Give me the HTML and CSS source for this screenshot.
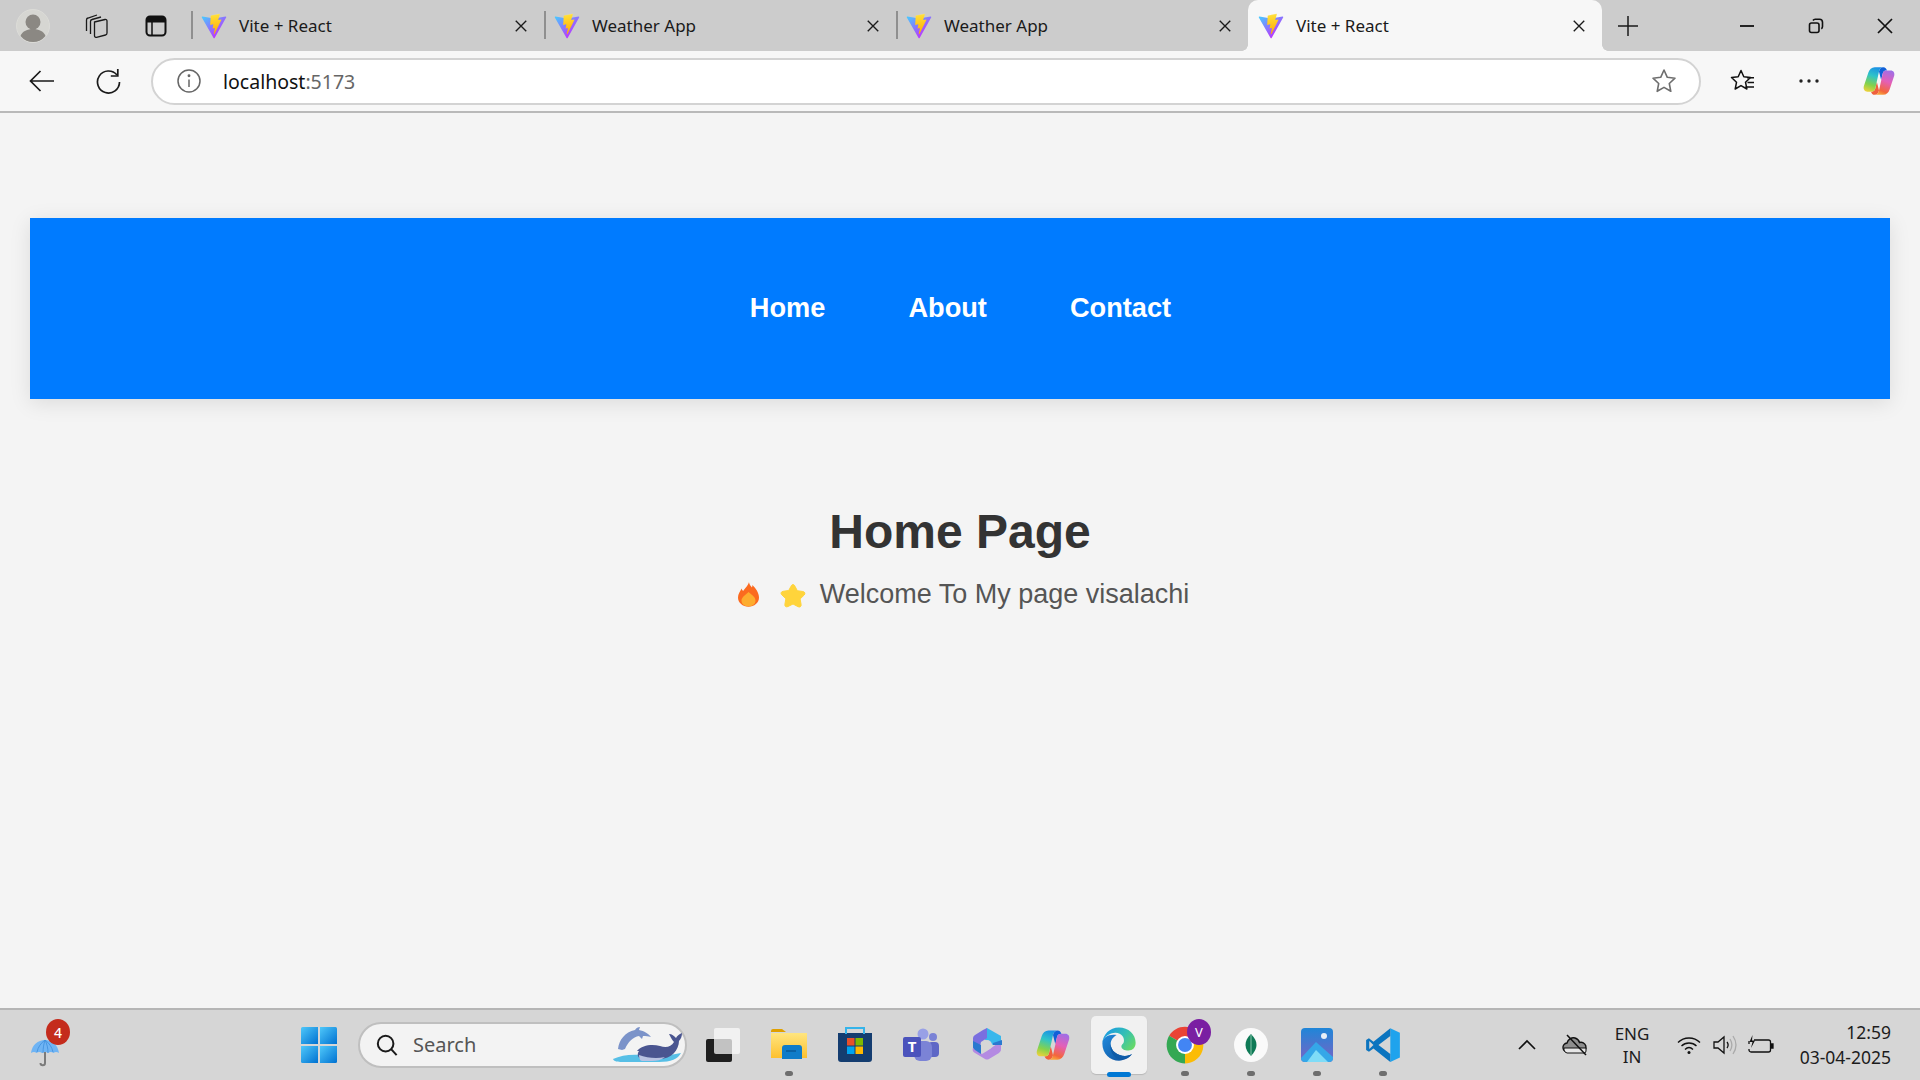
FILE: index.html
```html
<!DOCTYPE html>
<html lang="en">
<head>
<meta charset="utf-8">
<title>Vite + React</title>
<link rel="stylesheet" href="styles.css">
</head>
<body>
<svg class="defs" width="0" height="0" aria-hidden="true">
  <defs>
    <linearGradient id="viteA" x1="2" y1="4" x2="20" y2="28" gradientUnits="userSpaceOnUse"><stop offset="0" stop-color="#41d1ff"/><stop offset="1" stop-color="#bd34fe"/></linearGradient>
    <linearGradient id="viteB" x1="15" y1="2" x2="18" y2="26" gradientUnits="userSpaceOnUse"><stop offset="0" stop-color="#ffea83"/><stop offset=".1" stop-color="#ffdd35"/><stop offset="1" stop-color="#ffa800"/></linearGradient>
    <linearGradient id="copL" x1="14" y1="3" x2="6" y2="27" gradientUnits="userSpaceOnUse"><stop offset="0" stop-color="#1a8fe6"/><stop offset=".35" stop-color="#2fc4c8"/><stop offset=".7" stop-color="#86d24a"/><stop offset="1" stop-color="#f7d13a"/></linearGradient>
    <linearGradient id="copR" x1="27" y1="6" x2="18" y2="29" gradientUnits="userSpaceOnUse"><stop offset="0" stop-color="#9c6fe8"/><stop offset=".45" stop-color="#e45fb8"/><stop offset=".85" stop-color="#f3663c"/><stop offset="1" stop-color="#f8a33c"/></linearGradient>
    <linearGradient id="edgeT" x1="6" y1="4" x2="28" y2="22" gradientUnits="userSpaceOnUse"><stop offset="0" stop-color="#1b9de2"/><stop offset=".5" stop-color="#35c1b1"/><stop offset="1" stop-color="#6fdc5c"/></linearGradient>
    <linearGradient id="edgeB" x1="4" y1="10" x2="24" y2="30" gradientUnits="userSpaceOnUse"><stop offset="0" stop-color="#1f86d8"/><stop offset="1" stop-color="#0c4f9a"/></linearGradient>
    <linearGradient id="winG" x1="0" y1="0" x2="1" y2="1"><stop offset="0" stop-color="#4fc8fa"/><stop offset="1" stop-color="#0071d1"/></linearGradient>
    <linearGradient id="photoG" x1="0" y1="0" x2="0" y2="1"><stop offset="0" stop-color="#1f86d8"/><stop offset="1" stop-color="#7a63c4"/></linearGradient>
    <linearGradient id="folderG" x1="0" y1="0" x2="0" y2="1"><stop offset="0" stop-color="#ffe680"/><stop offset="1" stop-color="#fdc02f"/></linearGradient>
    <symbol id="vite" viewBox="0 0 32 32">
      <path fill="url(#viteA)" d="M29.884 6.146 16.742 29.646a.714.714 0 0 1-1.244.005L2.096 6.148a.714.714 0 0 1 .746-1.057l13.156 2.352a.714.714 0 0 0 .253 0l12.881-2.348a.714.714 0 0 1 .752 1.051Z"/>
      <path fill="url(#viteB)" d="M22.264 2.007 12.54 3.912a.357.357 0 0 0-.288.33l-.598 10.104a.357.357 0 0 0 .437.369l2.707-.625a.357.357 0 0 1 .43.42l-.804 3.939a.357.357 0 0 0 .453.413l1.672-.508a.357.357 0 0 1 .453.414l-1.278 6.187c-.08.387.435.598.65.267l.143-.222 7.925-15.815a.357.357 0 0 0-.387-.51l-2.787.538a.357.357 0 0 1-.41-.45l1.819-6.306a.357.357 0 0 0-.413-.45Z"/>
    </symbol>
    <symbol id="close" viewBox="0 0 16 16"><path d="M2 2 14 14M14 2 2 14" fill="none" stroke="#1a1a1a" stroke-width="1.6"/></symbol>
    <symbol id="copilot" viewBox="0 0 32 32">
      <path fill="#1060d8" d="M16 7C16.500 5 17.500 3 20 3 22 3 23 4.500 23.500 6 21.500 6 20 6.500 19.500 9L18 15Z"/>
      <path fill="#f0603c" d="M16 25C15.500 27 14.500 29 12 29 10 29 9 27.500 8.500 26 10.500 26 12 25.500 12.500 23L14 17Z"/>
      <path fill="url(#copL)" d="M12 3H20C17.500 3 16.500 5 16 7L12.500 23C12 25.500 10.500 26 8.500 26H5C2.500 26 1 24 1.700 21L6 8C7 5 9 3 12 3Z"/>
      <path fill="url(#copR)" d="M20 29H12C14.500 29 15.500 27 16 25L19.500 9C20 6.500 21.500 6 23.500 6H27C29.500 6 31 8 30.300 11L26 24C25 27 23 29 20 29Z"/>
    </symbol>
  </defs>
</svg>

<div class="window">
  <header class="tabstrip">
    <div class="strip-slot strip-avatar">
      <svg class="ico-avatar" viewBox="0 0 34 34"><circle cx="17" cy="17" r="16.500" fill="#d6d6d2" stroke="#dcdcd8"/><circle cx="17" cy="13" r="7.500" fill="#8b8883"/><path d="M4.500 27c2-5 7-7 12.500-7s10.500 2 12.500 7a16 16 0 0 1-25 0Z" fill="#8b8883"/></svg>
    </div>
    <div class="strip-slot strip-coll">
      <svg class="ico-24" viewBox="0 0 24 24" fill="none" stroke="#1a1a1a" stroke-width="1.300"><path d="M2.500 17V6c0-1 .5-1.800 1.500-2L13 1"/><path d="M6.500 20V7.500c0-1 .5-1.800 1.500-2L17 3"/><path d="M10.500 8l10.500-2.500c1.200-.3 2 .4 2 1.600V19c0 1-.5 1.800-1.500 2l-9 2.300c-1.200.3-2-.4-2-1.600Z"/></svg>
    </div>
    <div class="strip-slot strip-vert">
      <svg class="ico-24" viewBox="0 0 24 24"><rect x="2.500" y="2.500" width="19" height="19" rx="3.500" fill="none" stroke="#111" stroke-width="2"/><path d="M3 3h18v5.500H3Z" fill="#111"/><path d="M8 8v13" stroke="#111" stroke-width="1.500"/></svg>
    </div>
    <div class="tabs">
      <div class="tab"><i class="tab-sep"></i><svg class="ico-vite"><use href="#vite"/></svg><span class="tab-title">Vite + React</span><svg class="ico-close"><use href="#close"/></svg></div>
      <div class="tab"><i class="tab-sep"></i><svg class="ico-vite"><use href="#vite"/></svg><span class="tab-title">Weather App</span><svg class="ico-close"><use href="#close"/></svg></div>
      <div class="tab"><i class="tab-sep"></i><svg class="ico-vite"><use href="#vite"/></svg><span class="tab-title">Weather App</span><svg class="ico-close"><use href="#close"/></svg></div>
      <div class="tab tab-active"><i class="tab-gap"></i><svg class="ico-vite"><use href="#vite"/></svg><span class="tab-title">Vite + React</span><svg class="ico-close"><use href="#close"/></svg></div>
    </div>
    <div class="strip-new">
      <svg class="ico-22" viewBox="0 0 22 22"><path d="M11 1v20M1 11h20" stroke="#1a1a1a" stroke-width="1.500" fill="none"/></svg>
    </div>
    <div class="winctl">
      <div class="winbtn"><svg class="ico-16" viewBox="0 0 16 16"><path d="M1 8h14" stroke="#111" stroke-width="1.800"/></svg></div>
      <div class="winbtn"><svg class="ico-16" viewBox="0 0 16 16" fill="none" stroke="#111" stroke-width="1.600"><rect x="1.500" y="5" width="9.500" height="9.500" rx="2"/><path d="M5 2.500c.5-.8 1.200-1.200 2.200-1.200h4.300c1.800 0 3 1.200 3 3v4.300c0 1-.4 1.700-1.200 2.200"/></svg></div>
      <div class="winbtn"><svg class="ico-16" viewBox="0 0 16 16"><path d="M1 1 15 15M15 1 1 15" stroke="#111" stroke-width="1.700" fill="none"/></svg></div>
    </div>
  </header>

  <div class="toolbar">
    <div class="tool-slot">
      <svg class="ico-26" viewBox="0 0 26 26" fill="none" stroke="#1a1a1a" stroke-width="1.700"><path d="M25 13H1.500M11.500 3 1.500 13l10 10"/></svg>
    </div>
    <div class="tool-slot">
      <svg class="ico-26" viewBox="0 0 26 26" fill="none" stroke="#1a1a1a" stroke-width="1.700"><path d="M22 7A11 11 0 1 0 24.500 14"/><path d="M22.800 1v7h-7"/></svg>
    </div>
    <div class="addressbar">
      <svg class="ico-info" viewBox="0 0 24 24" fill="none" stroke="#666" stroke-width="1.500"><circle cx="12" cy="12" r="11"/><path d="M12 10.500V18"/><circle cx="12" cy="6.800" r=".7" fill="#666"/></svg>
      <span class="url">localhost<span class="url-port">:5173</span></span>
      <svg class="ico-star" viewBox="0 0 26 26" fill="none" stroke="#6e6e6e" stroke-width="1.600" stroke-linejoin="round"><path d="m13 2 3.300 7.300 7.700.9-5.700 5.300 1.500 7.800L13 19.400l-6.800 3.900 1.500-7.800L2 10.200l7.700-.9Z"/></svg>
    </div>
    <div class="tool-actions">
      <div class="tool-slot">
        <svg class="ico-26" viewBox="0 0 26 26" fill="none" stroke="#111" stroke-width="1.500" stroke-linejoin="round"><path d="m11 2.500 2.800 6.300 6.700.7-5 4.700 1.400 6.800-5.900-3.400-5.800 3.400 1.300-6.700-5-4.800 6.700-.7Z"/><path d="M17 9.800h7M17.500 14.500h6.500M15.500 19h8.500"/></svg>
      </div>
      <div class="tool-slot">
        <svg class="ico-22" viewBox="0 0 22 22" fill="#222"><circle cx="3" cy="11" r="1.700"/><circle cx="11" cy="11" r="1.700"/><circle cx="19" cy="11" r="1.700"/></svg>
      </div>
      <div class="tool-slot">
        <svg class="ico-34"><use href="#copilot"/></svg>
      </div>
    </div>
  </div>

  <main class="page">
    <nav class="navbar">
      <a class="navlink">Home</a>
      <a class="navlink">About</a>
      <a class="navlink">Contact</a>
    </nav>
    <section class="hero">
      <h1 class="hero-title">Home Page</h1>
      <p class="hero-sub">
        <svg class="emoji" viewBox="0 0 24 28"><path d="M12.500 0c.8 3 1.800 4 3.500 6 .3-1 .5-1.700.4-2.800C20 6.500 24 12 24 17.500 24 23.500 18.500 28 12 28S0 23.500 0 17.500C0 13 2.500 10.500 4 7c.5 1.300 1 2 2 3 1.500-3 5-5 6.500-10Z" fill="#fb6a1f"/><path d="M12 11c3.500 3 8 5.500 8 10 0 3.500-3.500 6.500-8 6.500S4 24.500 4 21c0-4.500 5-6.500 8-10Z" fill="#fdac2e"/></svg>
        <svg class="emoji emoji-star" viewBox="0 0 28 26"><path d="M14 2.500c1 0 1.500.8 2 1.800l2.300 4.400 5.500.8c2.300.4 2.700 2.200 1.300 3.600l-4 3.900 1 5.400c.4 2.200-1.300 3.200-3 2.300L14 22l-5 2.500c-1.800 1-3.500-.1-3.100-2.300l1-5.400-4-3.900c-1.500-1.400-1-3.200 1.300-3.600l5.500-.8L12 4.300c.5-1 1-1.800 2-1.800Z" fill="#ffd43b" stroke="#ffd43b"/></svg>
        <span>Welcome To My page visalachi</span>
      </p>
    </section>
  </main>

  <footer class="taskbar">
    <div class="tb-weather">
      <svg class="ico-weather" viewBox="0 0 30 30"><path d="M1 16C2 8 8 3 15 3s13 5 14 13c-2-1.500-4-1.500-5.500 0-1.500-1.500-4-1.500-5.500 0-1.500-1.500-4-1.500-6 0-1.500-1.500-4-1.500-5.500 0C5 14.500 3 14.500 1 16Z" fill="#6fb4f4"/><path d="M13 16c0-5 .8-9 2-13M18 16c0-5-1-9-3-13M7 15c1-5 4-9 8-12M23 15c-1-5-4-9-8-12" stroke="#3f8edc" stroke-width=".8" fill="none"/><path d="M15 15v11c0 3-4.500 3-4.500 0" fill="none" stroke="#7b7b7b" stroke-width="2"/></svg>
      <span class="badge badge-red">4</span>
    </div>
    <div class="tb-start">
      <svg class="ico-start" viewBox="0 0 36 36"><g fill="url(#winG)"><path d="M1.500 0H17v17H0V1.500A1.500 1.500 0 0 1 1.500 0Z"/><path d="M19 0h15.500A1.500 1.500 0 0 1 36 1.500V17H19Z"/><path d="M0 19h17v17H1.500A1.500 1.500 0 0 1 0 34.500Z"/><path d="M19 19h17v15.500a1.500 1.500 0 0 1-1.500 1.500H19Z"/></g></svg>
    </div>
    <div class="tb-search">
      <svg class="ico-search" viewBox="0 0 24 24" fill="none" stroke="#1a1a1a" stroke-width="2.200"><circle cx="10.500" cy="10.500" r="8.500"/><path d="m16.500 16.500 6 6.500"/></svg>
      <span class="tb-search-text">Search</span>
      <svg class="ico-whales" viewBox="0 0 74 40">
        <path d="M2 34c8-4 18-5 30-4 10 1 24 1 38-2-3 6-10 9-22 9H14C8 37 3 37 2 34Z" fill="#57bfe6"/>
        <path d="M7 24C8 15 14 7 24 5c1-2 3-3 5-3l-1 3c5 1 10 4 12 7-3-1-5-1-8-1l-1 3-3-3c-6 1-11 6-14 13l-3 1Z" fill="#7b93c9"/>
        <path d="M26 26c5-6 15-7 23-5 6 2 11 1 14-4-2-2-4-6-5-8 3 0 5 2 7 4 1-2 3-4 6-5 0 3-1 6-3 8 0 9-8 18-19 18H31c-3 0-6-4-3-8Z" fill="#4a5590"/>
        <path d="M28 30c8 3 18 4 26 2-4 3-8 4-13 4H31c-2 0-3-3-3-6Z" fill="#b9c2e2"/>
      </svg>
    </div>
    <div class="tb-apps">
      <div class="tb-app"><svg class="ico-36" viewBox="0 0 36 36"><rect x="1" y="12" width="26" height="23" rx="2" fill="#1f1f1f"/><rect x="9" y="1" width="26" height="26" rx="2" fill="#fafafa" opacity=".75"/></svg></div>
      <div class="tb-app tb-run"><svg class="ico-36" viewBox="0 0 36 36"><path d="M0 4a2 2 0 0 1 2-2h9l4 3h-15Z" fill="#e0a000"/><path d="M0 6h36v25H0Z" fill="url(#folderG)"/><path d="M14 21a3 3 0 0 1 3-3h14a3 3 0 0 1 3 3v11H14Z" fill="#0f7cc9" transform="translate(-3 0)"/><path d="M15 24h10" stroke="#0a5a99" stroke-width="1.500"/></svg></div>
      <div class="tb-app"><svg class="ico-36" viewBox="0 0 36 36"><path d="M1 6h34v26a3 3 0 0 1-3 3H4a3 3 0 0 1-3-3Z" fill="#143d70"/><path d="M9 7V1h18v6" fill="none" stroke="#35b4ea" stroke-width="2"/><rect x="10" y="11" width="7.500" height="7.500" fill="#e8502a"/><rect x="18.500" y="11" width="7.500" height="7.500" fill="#7fb900"/><rect x="10" y="19.500" width="7.500" height="7.500" fill="#00a4ef"/><rect x="18.500" y="19.500" width="7.500" height="7.500" fill="#ffb900"/></svg></div>
      <div class="tb-app"><svg class="ico-36" viewBox="0 0 36 36"><circle cx="30" cy="10" r="4" fill="#7b83d6"/><rect x="25" y="15" width="11" height="15" rx="4" fill="#5e67c6"/><circle cx="20" cy="7" r="5.500" fill="#98a0e6"/><rect x="11" y="14" width="18" height="20" rx="6" fill="#7b83d6"/><rect x="0" y="10" width="18" height="20" rx="2" fill="#4b53bc"/><text class="teams-t" x="9" y="25" text-anchor="middle">T</text></svg></div>
      <div class="tb-app"><svg class="ico-36" viewBox="0 0 36 36"><path d="M18 1 32 9v5l-8 4-9-6-1-6Z" fill="#38b7ec"/><path d="M14 3 18 1v10l-6 4-2 9-6-3V11a4 4 0 0 1 2-3Z" fill="#7a6fe0"/><path d="M4 21l9 6 5-3 14-10v8a4 4 0 0 1-2 4l-10 6a4 4 0 0 1-4 0l-10-6a4 4 0 0 1-2-5Z" fill="#b48ae2"/><path d="M4 14 12 18v9l-6-4a4 4 0 0 1-2-4Z" fill="#2a79cf"/><circle cx="18" cy="18" r="5" fill="#d6d6d6"/><path d="M24 18h9v-5l-9 3Z" fill="#2a79cf"/></svg></div>
      <div class="tb-app"><svg class="ico-36"><use href="#copilot"/></svg></div>
      <div class="tb-app tb-active"><svg class="ico-38" viewBox="0 0 32 32"><path fill="url(#edgeB)" d="M2 15.500C2 24 8.500 30 16 30c4.500 0 8.500-2 11-5.500-1.500 1-3.500 1.500-6 1.500-6 0-12-4-12-10 0-3 2-6 5-7.500C8 7.500 2 10 2 15.500Z"/><path fill="url(#edgeT)" d="M16 2C8 2 2.500 8 2 15c1-5 6-8.500 11-8.500 5.500 0 8 4.500 7 8-.5 1.500-2 2-2 3.500 0 2 2.500 3.500 6 3.500 3.500 0 6-2.500 6-6.500C30 7.500 24 2 16 2Z"/><path fill="#0e5ca8" d="M9 16c0 6 6 10 12 10 2.500 0 4.500-.5 6-1.500-3 4-8 5-11.500 4C11 27 8 21.500 9 16Z"/></svg><i class="run-line"></i></div>
      <div class="tb-app tb-run"><svg class="ico-chrome" viewBox="0 0 32 32"><path d="M16 16 3.900 9A14 14 0 0 1 28.100 9Z" fill="#ea4335"/><path d="M16 16 3.900 9A14 14 0 0 0 16 30Z" fill="#34a853"/><path d="M16 16 16 30A14 14 0 0 0 28.100 9Z" fill="#fbbc05"/><circle cx="16" cy="16" r="6.800" fill="#fff"/><circle cx="16" cy="16" r="5.300" fill="#4285f4"/></svg><span class="badge badge-purple">V</span></div>
      <div class="tb-app tb-run"><svg class="ico-36" viewBox="0 0 36 36"><circle cx="18" cy="18" r="17" fill="#fafafa"/><path d="M18 7c4 4 5.500 7.500 5.500 11S21 26 18 29c-3-3-5.500-7-5.500-11S14 11 18 7Z" fill="#0f7a56"/><path d="M18 8v21" stroke="#a3d9c0" stroke-width=".8"/></svg></div>
      <div class="tb-app tb-run"><svg class="ico-36" viewBox="0 0 36 36"><rect x="2" y="1" width="32" height="34" rx="4" fill="url(#photoG)"/><circle cx="25" cy="9" r="3" fill="#e8eef7"/><path d="M2 31 17 15l17 15v1a4 4 0 0 1-4 4H6a4 4 0 0 1-4-4Z" fill="#35a7e8"/><path d="M8 35 17 23l12 12Z" fill="#7fdcf7"/></svg></div>
      <div class="tb-app tb-run"><svg class="ico-36" viewBox="0 0 32 32"><path d="M22.500 1 31 5v22l-8.500 4Z" fill="#1fa3ed"/><path d="M22.500 1v7L12 16l10.500 8v7L7.500 19 3.500 22 1 20.500V11.500L3.500 10l4 3Z" fill="#0b74bf"/><path d="M3.800 12.500 7.500 16l-3.700 3.500Z" fill="#d6d6d6"/></svg></div>
    </div>
    <div class="tb-tray">
      <div class="tray tray-44"><svg class="ico-18" viewBox="0 0 18 18"><path d="M1 13 9 5l8 8" fill="none" stroke="#111" stroke-width="1.700"/></svg></div>
      <div class="tray tray-44 tray-gap"><svg class="ico-cloud" viewBox="0 0 26 22"><path d="M6 18a4.500 4.500 0 0 1-1-9C6 5 10 3 13 4c2.500.8 4 2.500 4.500 4.500A4.800 4.800 0 0 1 20.500 18Z" fill="#8e8e8e" stroke="#111" stroke-width="1.400"/><path d="M2 14h22v3a2 2 0 0 1-2 2H5a4 4 0 0 1-3-3Z" fill="#e6e6e6" stroke="#111" stroke-width="1"/><path d="m5 1 19 20" stroke="#111" stroke-width="1.500"/></svg></div>
      <div class="tray-lang"><span>ENG</span><span>IN</span></div>
      <div class="tray tray-44"><svg class="ico-24" viewBox="0 0 24 24" fill="none" stroke="#111" stroke-width="1.400"><path d="M1 9.500c6-6 16-6 22 0M4.500 13c4-4 11-4 15 0M8 16.500c2.500-2.500 5.500-2.500 8 0"/><circle cx="12" cy="19.500" r="1.500" fill="#111" stroke="none"/></svg></div>
      <div class="tray tray-28"><svg class="ico-24" viewBox="0 0 24 24" fill="none" stroke="#111" stroke-width="1.300"><path d="M1 9v6h4l6 5V4L5 9Z"/><path d="M14 9c1.500 2 1.500 4 0 6"/><path d="M17 6c2.500 4 2.500 8 0 12M20 3c4 6 4 12 0 18" stroke="#aaa"/></svg></div>
      <div class="tray tray-44"><svg class="ico-battery" viewBox="0 0 26 20" fill="none" stroke="#111" stroke-width="1.300"><path d="M6 5h14.500a2 2 0 0 1 2 2v8a2 2 0 0 1-2 2H3a2 2 0 0 1-2-2v-1"/><path d="M1 9V6"/><path d="M23 9h2v4h-2" fill="#111"/><path d="M4.500 0 1.500 7h3l-1.500 6 4-7.500H4Z" fill="#111" stroke="none"/></svg></div>
      <div class="tray-clock"><span>12:59</span><span>03-04-2025</span></div>
    </div>
  </footer>
</div>
</body>
</html>
```

FILE: styles.css
```css
* { box-sizing: border-box; }
html, body { margin: 0; height: 100%; }
body { font-family: "Liberation Sans", Arial, sans-serif; background: #f4f4f4; overflow: hidden; }
.defs { position: absolute; }
.window { display: flex; flex-direction: column; height: 1080px; }

.tabstrip { display: flex; height: 51px; background: #ccc; flex: none; }
.strip-slot, .strip-new, .winbtn, .tool-slot, .tray, .tb-start { display: flex; align-items: center; justify-content: center; flex: none; }
.strip-avatar { width: 66px; }
.strip-coll { width: 60px; }
.strip-vert { width: 60px; margin-right: 5px; }
.tabs { display: flex; }
.tab { position: relative; display: flex; align-items: center; width: 353px; height: 51px; font-family: "Noto Sans", sans-serif; font-size: 17px; color: #1a1a1a; }
.tab:nth-child(n+2) { width: 352px; }
.tab-sep { width: 2px; height: 28px; background: #8f8f8f; flex: none; margin-top: -1px; }
.tab-gap { width: 2px; flex: none; }
.ico-vite { width: 28px; height: 28px; margin-left: 7px; flex: none; }
.tab-title { margin-left: 11px; flex: 1; white-space: nowrap; }
.ico-close { width: 14px; height: 14px; margin-right: 16px; flex: none; }
.tab-active { width: 354px !important; background: #f7f7f7; border-radius: 10px 10px 0 0; }
.tab-active::before, .tab-active::after { content: ""; position: absolute; bottom: 0; width: 6px; height: 6px; }
.tab-active::before { left: -6px; background: radial-gradient(circle at 0 0, #ccc 5.5px, #f7f7f7 6px); }
.tab-active::after { right: -6px; background: radial-gradient(circle at 100% 0, #ccc 5.5px, #f7f7f7 6px); }
.strip-new { width: 52px; }
.winctl { display: flex; margin-left: auto; margin-right: 1px; }
.winbtn { width: 69px; }

.ico-avatar { width: 34px; height: 34px; }
.ico-16 { width: 16px; height: 16px; }
.ico-18 { width: 18px; height: 18px; }
.ico-22 { width: 22px; height: 22px; }
.ico-24 { width: 24px; height: 24px; }
.ico-26 { width: 26px; height: 26px; }
.ico-34 { width: 34px; height: 34px; }
.ico-36 { width: 36px; height: 36px; }
.ico-38 { width: 38px; height: 38px; }
.ico-chrome { width: 42px; height: 42px; }

.toolbar { display: flex; align-items: center; height: 62px; padding: 0 0 0 9px; background: #f7f7f7; border-bottom: 2px solid #b9b9b9; flex: none; }
.tool-slot { width: 66px; height: 48px; }
.addressbar { display: flex; align-items: center; width: 1550px; height: 47px; margin-left: 10px; padding: 0 24px; background: #fff; border: 2px solid #d3d3d3; border-radius: 24px; flex: none; }
.ico-info { width: 24px; height: 24px; flex: none; }
.url { margin-left: 22px; flex: 1; font-family: "Noto Sans", sans-serif; font-size: 19.500px; color: #111; }
.url-port { color: #666; }
.ico-star { width: 26px; height: 26px; flex: none; margin-right: -2px; }
.tool-actions { display: flex; margin-left: 9px; }
.tool-actions .tool-slot:last-child { margin-left: 4px; }

.page { flex: 1; padding: 105px 30px 0; background: #f4f4f4; min-height: 0; }
.navbar { display: flex; justify-content: center; align-items: center; gap: 83px; height: 181px; padding-bottom: 2px; padding-left: 1px; background: #007bff; box-shadow: 0 4px 20px rgba(0,0,0,.1); }
.navlink { color: #fff; font-size: 27.2px; font-weight: 700; }
.hero { display: flex; flex-direction: column; align-items: center; margin-top: 105px; }
.hero-title { margin: 0; color: #333; font-size: 48px; font-weight: 700; line-height: 55px; }
.hero-sub { display: flex; align-items: center; margin: 20px 0 0; padding-left: 6px; color: #555; font-size: 27px; line-height: 31px; }
.emoji { width: 21px; height: 27px; flex: none; margin-left: 1px; }
.emoji-star { width: 28px; height: 26px; margin-left: 20px; margin-right: 13px; }

.taskbar { display: flex; align-items: center; height: 72px; background: #d6d6d6; border-top: 2px solid #b5b5b5; flex: none; }
.tb-weather { position: relative; display: flex; align-items: center; justify-content: center; width: 50px; height: 70px; margin-left: 20px; padding-top: 14px; flex: none; }
.ico-weather { width: 30px; height: 30px; }
.badge { position: absolute; display: flex; align-items: center; justify-content: center; width: 24px; height: 26px; border-radius: 50%; font-family: "Noto Sans", sans-serif; font-size: 14px; color: #fff; }
.badge-red { top: 9px; right: 0; background: #c42b1c; font-weight: 500; }
.badge-purple { top: 9px; right: 7px; background: #7a1fa2; font-size: 13px; }
.tb-start { width: 62px; margin-left: 218px; }
.ico-start { width: 36px; height: 36px; }
.tb-search { display: flex; align-items: center; width: 329px; height: 46px; margin-left: 8px; margin-top: -1px; padding-left: 16px; background: #f3f3f3; border: 2px solid #bfbfbf; border-radius: 23px; flex: none; }
.ico-search { width: 22px; height: 22px; flex: none; }
.tb-search-text { margin-left: 15px; flex: 1; font-family: "Noto Sans", sans-serif; font-size: 20px; color: #555; }
.ico-whales { width: 74px; height: 40px; flex: none; }
.tb-apps { display: flex; margin-left: 3px; }
.tb-app { position: relative; display: flex; align-items: center; justify-content: center; width: 66px; height: 70px; flex: none; }
.tb-run::after { content: ""; position: absolute; bottom: 4px; left: 29px; width: 8px; height: 5px; border-radius: 3px; background: #6e6e6e; }
.tb-active::before { content: ""; position: absolute; left: 5px; top: 6px; width: 56px; height: 58px; border-radius: 5px; background: #f1f1f1; box-shadow: 0 1px 1px #b8b8b8; }
.tb-active svg { position: relative; margin-bottom: 2px; }
.run-line { position: absolute; left: 21px; bottom: 3px; width: 24px; height: 5px; border-radius: 3px; background: #0078d4; }
.teams-t { fill: #fff; font-family: "Noto Sans", sans-serif; font-size: 15px; font-weight: 700; }

.tb-tray { display: flex; align-items: center; margin-left: auto; margin-right: 29px; font-family: "Noto Sans", sans-serif; color: #1c1c1c; font-size: 17px; }
.tray-44 { width: 44px; }
.tray-28 { width: 28px; }
.tray-gap { margin-left: 4px; }
.ico-cloud { width: 26px; height: 22px; }
.ico-battery { width: 26px; height: 20px; }
.tray-lang { display: flex; flex-direction: column; align-items: center; width: 70px; line-height: 23px; }
.tray-clock { display: flex; flex-direction: column; align-items: flex-end; width: 108px; line-height: 25px; font-size: 17.500px; }
```
